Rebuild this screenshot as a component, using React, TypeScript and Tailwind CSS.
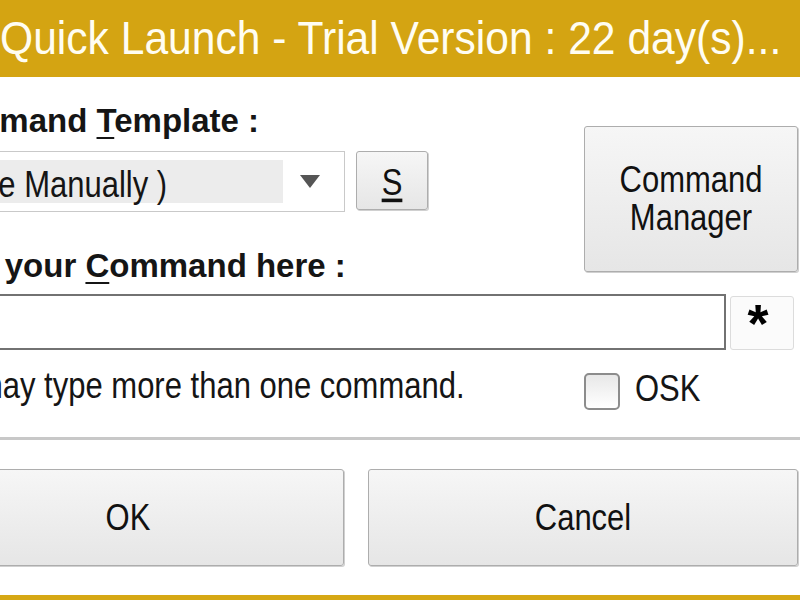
import React from "react";

const btn =
  "border border-[#adadad] rounded-[3px] bg-gradient-to-b from-[#f6f6f6] to-[#e6e6e6] shadow-[1px_1px_0_#d0d0d0] flex items-center justify-center text-[#111]";

export default function App() {
  return (
    <div className="w-[800px] h-[600px] overflow-hidden bg-white flex flex-col font-['Liberation_Sans',Arial,sans-serif] text-[#151515]">
      {/* title bar */}
      <div className="h-[77px] shrink-0 bg-[#d4a412] pt-[16px] whitespace-nowrap">
        <span className="inline-block text-[42.6px] leading-[42px] text-[#fffdf2] scale-y-[1.1] origin-center">
          Quick Launch - Trial Version : 22 day(s)...
        </span>
      </div>

      {/* block with template + command manager */}
      <div className="flex shrink-0">
        <div className="w-[584px] flex flex-col">
          <div className="mt-[24px] ml-[-74px] whitespace-nowrap font-bold text-[33px] leading-[40px]">
            Command{" "}
            <span className="underline underline-offset-[5px] decoration-2">T</span>
            emplate :
          </div>
          <div className="mt-[10px] flex">
            <div className="ml-[-100px] w-[445px] h-[61px] border border-[#c9c9c9] bg-white flex items-center p-[8px]">
              <div className="w-[374px] h-[43px] bg-[#ececec] flex items-center pl-[21px] whitespace-nowrap">
                <span className="inline-block mt-[6px] text-[31px] leading-[36px] scale-y-[1.2]">
                  ( Type Manually )
                </span>
              </div>
              <div className="flex-1 flex justify-center">
                <svg width="20" height="13" viewBox="0 0 20 13">
                  <polygon points="0,0 20,0 10,13" fill="#555" />
                </svg>
              </div>
            </div>
            <div className={`ml-[11px] w-[72px] h-[59px] ${btn}`}>
              <span className="inline-block mt-[5px] text-[31px] leading-[36px] scale-y-[1.2] underline underline-offset-[3px]">
                S
              </span>
            </div>
          </div>
          <div className="mt-[34px] ml-[-79px] whitespace-nowrap font-bold text-[33px] leading-[40px]">
            Type your{" "}
            <span className="underline underline-offset-[5px] decoration-2">C</span>
            ommand here :
          </div>
        </div>
        <div className="pt-[49px]">
          <div className={`w-[214px] h-[146px] ${btn}`}>
            <span className="inline-block text-center text-[31px] leading-[32px] scale-y-[1.2]">
              Command
              <br />
              Manager
            </span>
          </div>
        </div>
      </div>

      {/* command input */}
      <div className="mt-[8px] ml-[-100px] flex items-end shrink-0">
        <div className="w-[826px] h-[56px] border-2 border-[#727272] bg-white" />
        <div className="ml-[4px] w-[64px] h-[54px] border border-[#dcdcdc] rounded-[3px] bg-[#fbfbfb] flex items-start justify-center pr-[8px]">
          <span className="font-bold text-[54px] leading-[52px] text-black mt-[0px]">*</span>
        </div>
      </div>

      {/* hint + OSK */}
      <div className="mt-[16px] flex items-start shrink-0">
        <div className="w-[584px] whitespace-nowrap">
          <span className="inline-block ml-[-84px] text-[31px] leading-[40px] scale-y-[1.2]">
            You may type more than one command.
          </span>
        </div>
        <div className="mt-[7px] w-[36px] h-[37px] rounded-[5px] border-2 border-[#8c8c8c] bg-gradient-to-b from-[#e8e8e8] to-white" />
        <span className="ml-[15px] mt-[3px] inline-block text-[31px] leading-[40px] scale-y-[1.2]">
          OSK
        </span>
      </div>

      {/* separator */}
      <div className="mt-[27px] h-[3px] bg-[#c8c8c8] shrink-0" />

      {/* buttons */}
      <div className="mt-[29px] flex shrink-0">
        <div className={`ml-[-88px] w-[432px] h-[97px] ${btn}`}>
          <span className="inline-block text-[31px] leading-[36px] scale-y-[1.2]">OK</span>
        </div>
        <div className={`ml-[24px] w-[430px] h-[97px] ${btn}`}>
          <span className="inline-block text-[31px] leading-[36px] scale-y-[1.2]">Cancel</span>
        </div>
      </div>

      <div className="mt-auto h-[5px] bg-[#d6a814] shrink-0" />
    </div>
  );
}
